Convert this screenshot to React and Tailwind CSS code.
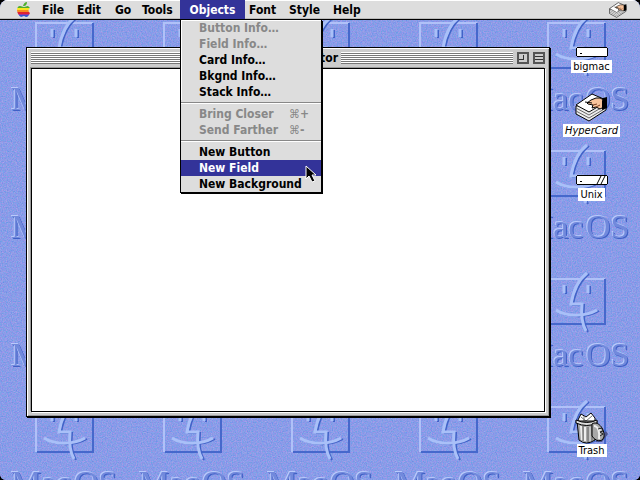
import clsx from "clsx";

const menus = [
  { label: "File", width: "w-[35px]" },
  { label: "Edit", width: "w-[38px]" },
  { label: "Go", width: "w-[27px]" },
  { label: "Tools", width: "w-[42px]" },
  { label: "Objects", width: "w-[65px]", open: true },
  { label: "Font", width: "w-[40px]" },
  { label: "Style", width: "w-[44px]" },
  { label: "Help", width: "w-[40px]" },
];

const objectsMenu = [
  [
    { label: "Button Info…", disabled: true },
    { label: "Field Info…", disabled: true },
    { label: "Card Info…" },
    { label: "Bkgnd Info…" },
    { label: "Stack Info…" },
  ],
  [
    { label: "Bring Closer", disabled: true, shortcut: "+" },
    { label: "Send Farther", disabled: true, shortcut: "-" },
  ],
  [
    { label: "New Button" },
    { label: "New Field", active: true },
    { label: "New Background" },
  ],
];

function FaceLines() {
  return (
    <>
      <path d="M75 17C66 24 61 36 59 48H70C69 58 70 68 74 75" />
      <path d="M44 54C55 61 73 61 85 54" />
      <path d="M52 29V37M76 29V37" />
    </>
  );
}

function Wallpaper() {
  return (
    <svg className="absolute inset-0 h-full w-full font-normal" aria-hidden="true">
      <defs>
        <filter id="grain" x="0" y="0" width="100%" height="100%" colorInterpolationFilters="sRGB">
          <feTurbulence type="fractalNoise" baseFrequency="0.8" numOctaves="2" seed="4" />
          <feColorMatrix
            type="matrix"
            values="0.4 0 0 0 0.34  0 0.18 0 0 0.52  0 0 0.1 0 0.86  0 0 0 0 1"
          />
        </filter>
        <pattern id="macos" width="128" height="128" patternUnits="userSpaceOnUse">
          <path d="M36 68V23H93" fill="none" stroke="#b0c1f8" strokeWidth="2" />
          <path d="M37 68H93V23" fill="none" stroke="#4668cc" strokeWidth="2" />
          <g fill="none" stroke="#4163c8" strokeWidth="2" transform="translate(2 1)">
            <FaceLines />
          </g>
          <g fill="none" stroke="#a9c0f8" strokeWidth="3">
            <FaceLines />
          </g>
          <g fontFamily="'Liberation Serif', serif" fontSize="34">
            <g fill="#3f60c6">
              <text x="12" y="111">Mac</text>
              <text x="75" y="111">OS</text>
            </g>
            <g fill="#b9cafb">
              <text x="10" y="109">Mac</text>
              <text x="73" y="109">OS</text>
            </g>
            <g fill="#7189dc">
              <text x="11" y="110">Mac</text>
              <text x="74" y="110">OS</text>
            </g>
          </g>
        </pattern>
      </defs>
      <rect width="100%" height="100%" fill="#8c9ae6" />
      <rect width="100%" height="100%" filter="url(#grain)" />
      <rect width="100%" height="100%" fill="url(#macos)" />
    </svg>
  );
}

function AppleLogo() {
  return (
    <svg width="14" height="15" viewBox="0 0 14 15" aria-hidden="true">
      <defs>
        <clipPath id="apple">
          <path d="M6 4C7 1 8 0 10 0C10 2 9 4 7 4ZM3 4C5 4 5 5 7 5C9 5 9 4 11 4L13 6C11 7 11 10 13 11C12 13 11 15 9 15C8 15 8 14 7 14C6 14 5 15 4 15C2 14 0 11 0 8C0 6 1 4 3 4Z" />
        </clipPath>
      </defs>
      <g clipPath="url(#apple)">
        <rect width="14" height="6" fill="#4fae2a" />
        <rect y="6" width="14" height="2" fill="#fbe421" />
        <rect y="8" width="14" height="2" fill="#f78b1f" />
        <rect y="10" width="14" height="2" fill="#dd2233" />
        <rect y="12" width="14" height="1" fill="#a03399" />
        <rect y="13" width="14" height="2" fill="#3355cc" />
      </g>
    </svg>
  );
}

function HyperCardIcon({ size, height }) {
  return (
    <svg width={size} height={height} viewBox="0 0 33 29" aria-hidden="true">
      <path d="M1 13V21L14 28L31 17V9Z" fill="#eee" stroke="#000" />
      <path d="M1 15L14 22L31 12M1 18L14 25L31 15" fill="none" stroke="#666" strokeWidth="1" />
      <path d="M1 12L14 19L31 9V7L17 1Z" fill="#fff" stroke="#000" />
      <path d="M12 10L16 7L21 5H25L29 7V14L25 16L21 14L17 15L18 12L13 11Z" fill="#f7c39b" stroke="#000" />
      <path d="M28 5L32 4V15L27 17V8Z" fill="#000" />
      <path d="M18 12L22 11M21 14L25 12" stroke="#7b3f20" />
      <path d="M10 9L17 10" stroke="#000" />
    </svg>
  );
}

function DriveIcon({ slashes }) {
  return (
    <svg width="32" height="10" viewBox="0 0 32 10" aria-hidden="true">
      <path d="M1 0H31V1H32V9H31V10H1V9H0V1H1Z" fill="#000" shapeRendering="crispEdges" />
      <path d="M1 1H31V9H1Z" fill="#fff" shapeRendering="crispEdges" />
      <path d="M4 6H6V7H4Z" fill="#000" shapeRendering="crispEdges" />
      {slashes && <path d="M21 9L25 1M25 9L29 1" stroke="#000" />}
    </svg>
  );
}

function TrashIcon() {
  return (
    <svg width="33" height="32" viewBox="0 0 33 32" aria-hidden="true">
      <path d="M21 29L31 19L33 22L27 30H21Z" fill="#4a5490" />
      <path d="M3 8L6 2L11 5L16 1L20 6V12H4Z" fill="#fff" stroke="#000" />
      <path d="M6 5L11 9L17 4M9 4V9" fill="none" stroke="#777" />
      <path d="M2 9L4 28Q11 34 20 28L22 9Z" fill="#a9a9a9" stroke="#000" />
      <path d="M6 14L7 28M10 15V29" stroke="#eee" strokeWidth="2" />
      <path d="M8 14V29M13 15V30M17 14V29" stroke="#666" />
      <path d="M15 15V29" stroke="#ddd" />
      <path d="M1 8Q12 13 22 8V11Q12 16 1 11Z" fill="#ddd" stroke="#000" />
      <path d="M17 12C22 8 30 16 29 25C27 31 20 29 17 24Z" fill="#a8a8a8" stroke="#000" />
      <path d="M19 14C23 14 25 20 24 27" fill="none" stroke="#eee" strokeWidth="2" />
      <path d="M23 17L27 16L28 19L25 20L28 22L25 24" fill="none" stroke="#222" />
      <path d="M24 18H26" stroke="#fff" />
    </svg>
  );
}

function Cursor() {
  return (
    <svg
      className="pointer-events-none absolute top-[5px] right-1 z-10"
      width="12"
      height="18"
      viewBox="0 0 12 18"
      aria-hidden="true"
    >
      <path d="M1 1V14L4 11L7 17L10 16L7 10H11Z" fill="#000" stroke="#fff" />
    </svg>
  );
}

function MenuItem({ item }) {
  return (
    <li role="none" className="relative">
      <button
        role="menuitem"
        disabled={item.disabled}
        className={clsx(
          "flex h-4 w-full items-center pl-[18px] text-left whitespace-nowrap",
          item.disabled && "text-[#888]",
          item.active && "bg-[#333399] text-white"
        )}
      >
        <span className={item.shortcut && "w-[90px]"}>{item.label}</span>
        {item.shortcut && (
          <span className="flex">
            <span className="w-[11px] font-normal">⌘</span>
            {item.shortcut}
          </span>
        )}
      </button>
      {item.active && <Cursor />}
    </li>
  );
}

function Dropdown() {
  return (
    <div
      role="menu"
      className="absolute top-5 left-0 z-20 w-[142px] border-x border-b border-black bg-[#ddd] shadow-[1px_1px_0_#000]"
    >
      {objectsMenu.map((group, i) => (
        <div key={i}>
          {i > 0 && (
            <div className="py-0.5">
              <hr className="h-0.5 border-t border-b border-t-[#888] border-b-white" />
            </div>
          )}
          <ul role="none" className={clsx(i === 0 && "shadow-[inset_1px_1px_0_#fff]")}>
            {group.map((item) => (
              <MenuItem key={item.label} item={item} />
            ))}
          </ul>
        </div>
      ))}
    </div>
  );
}

function MenuBar() {
  return (
    <header className="relative z-10 flex h-5 items-stretch border-b border-black bg-[#ddd] pr-[13px] pl-[17px] shadow-[inset_0_1px_0_#fff,inset_0_-1px_0_#bbb]">
      <button aria-label="Apple menu" className="w-[21px]">
        <AppleLogo />
      </button>
      <nav className="flex">
        {menus.map((menu) => (
          <div key={menu.label} className={clsx("relative", menu.width)}>
            <button
              aria-expanded={menu.open}
              className={clsx(
                "h-full w-full px-1",
                menu.open ? "bg-[#333399] text-center text-white" : "text-left"
              )}
            >
              {menu.label}
            </button>
            {menu.open && <Dropdown />}
          </div>
        ))}
      </nav>
      <button aria-label="HyperCard" className="ml-auto">
        <HyperCardIcon size="18" height="16" />
      </button>
    </header>
  );
}

function Stripes({ className }) {
  return (
    <div
      className={clsx(
        "h-3 grow bg-[repeating-linear-gradient(to_bottom,#fff_0_1px,#777_1px_2px)]",
        className
      )}
    />
  );
}

function StackWindow() {
  return (
    <section className="flex grow flex-col border border-black bg-[#ccc] px-1 pb-1 shadow-[1px_1px_0_#000,inset_1px_1px_0_#fff,inset_-1px_-1px_0_#999]">
      <div className="flex h-5 items-center pb-px">
        <Stripes className="basis-8" />
        <h1 className="w-[106px] px-[3px] text-right">tor</h1>
        <Stripes className="basis-0" />
        <div className="flex gap-1 pl-1">
          <button aria-label="Zoom" className="size-3 border-2 border-[#555] bg-[#ccc]">
            <span className="block size-[5px] border-r border-b border-[#333]" />
          </button>
          <button aria-label="Collapse" className="flex size-3 items-center border-2 border-[#555] bg-[#ccc]">
            <span className="block h-1 w-full border-y border-[#333]" />
          </button>
        </div>
      </div>
      <div className="grow border border-black bg-white shadow-[-1px_-1px_0_#999,1px_1px_0_#fff]" />
    </section>
  );
}

function DesktopIcon({ label, italic, className, children }) {
  return (
    <button className={clsx("flex flex-col items-center text-[11px] leading-[13px] font-normal", className)}>
      {children}
      <span className={clsx("bg-white px-0.5", italic && "italic")}>{label}</span>
    </button>
  );
}

export default function App() {
  return (
    <div className="min-h-screen bg-black">
      <div className="relative flex min-h-screen flex-col overflow-hidden rounded-t-lg rounded-b-md font-['DejaVu_Sans_Condensed','DejaVu_Sans',sans-serif] text-[12px] leading-4 font-bold text-black">
        <Wallpaper />
        <MenuBar />
        <main className="relative flex grow">
          <div className="flex grow pt-[27px] pb-[63px] pl-[26px]">
            <StackWindow />
          </div>
          <aside className="flex w-[90px] flex-col items-center pt-[27px] pr-[7px] pb-[23px]">
            <DesktopIcon label="bigmac" className="gap-[3px]">
              <DriveIcon />
            </DesktopIcon>
            <DesktopIcon label="HyperCard" italic className="mt-5 gap-0.5">
              <HyperCardIcon size="33" height="29" />
            </DesktopIcon>
            <DesktopIcon label="Unix" className="mt-[38px] gap-[3px]">
              <DriveIcon slashes />
            </DesktopIcon>
            <DesktopIcon label="Trash" className="mt-auto">
              <TrashIcon />
            </DesktopIcon>
          </aside>
        </main>
      </div>
    </div>
  );
}
